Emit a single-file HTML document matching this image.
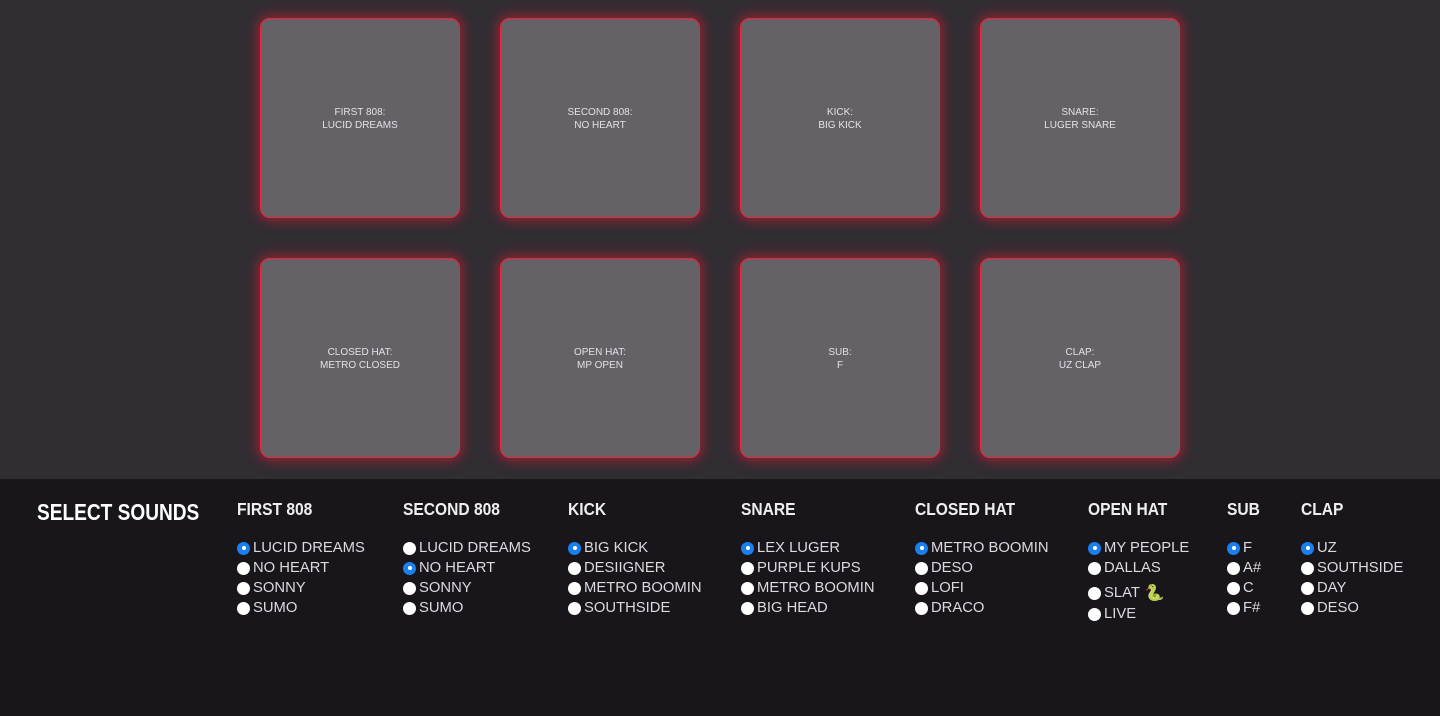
<!DOCTYPE html>
<html><head><meta charset="utf-8"><style>
*{margin:0;padding:0;box-sizing:border-box}
body{width:1440px;height:716px;overflow:hidden;background:#18151b;font-family:"Liberation Sans",sans-serif;position:relative}
.top{position:absolute;left:0;top:0;width:1440px;height:479px;background:#302d33}
.pad{position:absolute;width:200px;height:200px;background:#646167;border:1px solid #f0263a;border-radius:10px;box-shadow:0 0 12px 3px rgba(230,30,50,.55);display:flex;align-items:center;justify-content:center;text-align:center;color:#e4e2e6;font-size:10px;line-height:13px;padding-top:1px}
.bot{position:absolute;left:0;top:479px;width:1440px;height:237px;background:#18151b}
.title{position:absolute;left:37px;top:499px;color:#fff;font-weight:bold;font-size:23px;transform:scaleX(.83);transform-origin:left;white-space:nowrap}
.col{position:absolute;top:497px;color:#eee}
.col h3{font-size:17.5px;font-weight:bold;transform:scaleX(.89);transform-origin:left;white-space:nowrap;height:41px;line-height:24px}
.it{display:flex;align-items:center;height:20px;font-size:14.8px;color:#dcdadf;white-space:nowrap}
.r{width:13px;height:13px;border-radius:50%;background:#fff;margin-right:3px;position:relative;flex:none}
.r.on{background:#1a7ff0}
.r.on:after{content:"";position:absolute;left:4.5px;top:4.5px;width:4px;height:4px;border-radius:50%;background:#fff}
</style></head><body>
<div class="top"></div>
<div class="pad" style="left:260px;top:18px">FIRST 808:<br>LUCID DREAMS</div>
<div class="pad" style="left:500px;top:18px">SECOND 808:<br>NO HEART</div>
<div class="pad" style="left:740px;top:18px">KICK:<br>BIG KICK</div>
<div class="pad" style="left:980px;top:18px">SNARE:<br>LUGER SNARE</div>
<div class="pad" style="left:260px;top:258px">CLOSED HAT:<br>METRO CLOSED</div>
<div class="pad" style="left:500px;top:258px">OPEN HAT:<br>MP OPEN</div>
<div class="pad" style="left:740px;top:258px">SUB:<br>F</div>
<div class="pad" style="left:980px;top:258px">CLAP:<br>UZ CLAP</div>
<div class="bot"></div>
<div class="title">SELECT SOUNDS</div>
<div class="col" style="left:237px"><h3>FIRST 808</h3>
<div class="it"><span class="r on"></span>LUCID DREAMS</div><div class="it"><span class="r"></span>NO HEART</div><div class="it"><span class="r"></span>SONNY</div><div class="it"><span class="r"></span>SUMO</div></div>
<div class="col" style="left:403px"><h3>SECOND 808</h3>
<div class="it"><span class="r"></span>LUCID DREAMS</div><div class="it"><span class="r on"></span>NO HEART</div><div class="it"><span class="r"></span>SONNY</div><div class="it"><span class="r"></span>SUMO</div></div>
<div class="col" style="left:568px"><h3>KICK</h3>
<div class="it"><span class="r on"></span>BIG KICK</div><div class="it"><span class="r"></span>DESIIGNER</div><div class="it"><span class="r"></span>METRO BOOMIN</div><div class="it"><span class="r"></span>SOUTHSIDE</div></div>
<div class="col" style="left:741px"><h3>SNARE</h3>
<div class="it"><span class="r on"></span>LEX LUGER</div><div class="it"><span class="r"></span>PURPLE KUPS</div><div class="it"><span class="r"></span>METRO BOOMIN</div><div class="it"><span class="r"></span>BIG HEAD</div></div>
<div class="col" style="left:915px"><h3>CLOSED HAT</h3>
<div class="it"><span class="r on"></span>METRO BOOMIN</div><div class="it"><span class="r"></span>DESO</div><div class="it"><span class="r"></span>LOFI</div><div class="it"><span class="r"></span>DRACO</div></div>
<div class="col" style="left:1088px"><h3>OPEN HAT</h3>
<div class="it"><span class="r on"></span>MY PEOPLE</div><div class="it"><span class="r"></span>DALLAS</div><div class="it" style="height:26px;padding-top:4px"><span class="r"></span>SLAT <span style="font-size:16px;margin-left:5px">🐍</span></div><div class="it"><span class="r"></span>LIVE</div></div>
<div class="col" style="left:1227px"><h3>SUB</h3>
<div class="it"><span class="r on"></span>F</div><div class="it"><span class="r"></span>A#</div><div class="it"><span class="r"></span>C</div><div class="it"><span class="r"></span>F#</div></div>
<div class="col" style="left:1301px"><h3>CLAP</h3>
<div class="it"><span class="r on"></span>UZ</div><div class="it"><span class="r"></span>SOUTHSIDE</div><div class="it"><span class="r"></span>DAY</div><div class="it"><span class="r"></span>DESO</div></div>
</body></html>
